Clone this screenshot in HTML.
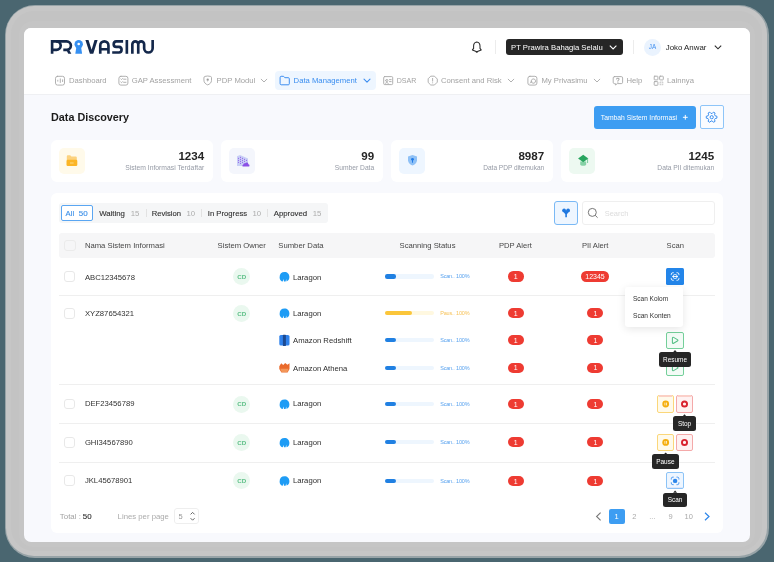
<!DOCTYPE html>
<html><head><meta charset="utf-8"><title>Data Discovery</title>
<style>
html,body{margin:0;padding:0;width:774px;height:562px;overflow:hidden;font-family:"Liberation Sans", sans-serif;}
#root{position:absolute;left:0;top:0;width:774px;height:562px;will-change:transform;}
.r{position:absolute;}
.t{position:absolute;white-space:nowrap;}
svg.r{overflow:visible;}
</style></head><body><div id="root">
<div class="r" style="left:0;top:0;width:774px;height:562px;background:#4a6670"></div>
<div class="r" style="left:4.5px;top:4.5px;width:764px;height:553px;border-radius:30px;background:#97a3a7"></div>
<div class="r" style="left:6px;top:6px;width:761px;height:550px;border-radius:28px;background:#c6c6c6"></div>
<div class="r" style="left:11px;top:11px;width:751px;height:540px;border-radius:23px;background:#c3c3c3"></div>
<div class="r" style="left:19px;top:21px;width:736px;height:526px;border-radius:14px;background:#c5c5c5"></div>
<div class="r" style="left:24px;top:28px;width:726px;height:513.5px;border-radius:7px;background:#f8f9fd;overflow:hidden">
<div class="r" style="left:0;top:0;width:726px;height:66px;background:#fff;border-bottom:1px solid #eff0f3"></div>
</div>
<svg class="r" style="left:0px;top:0px" width="774" height="100" viewBox="0 0 774 100">
<g fill="none" stroke="#14284b" stroke-width="2.65">
<path d="M52.1 53.8 V41.35 H56.45 A4.25 4.25 0 0 1 56.45 49.85 H52.1"/>
<path d="M56 41.35 H66.65 A4.25 4.25 0 0 1 66.65 49.85 H63.3"/>
<path d="M100.25 53.8 V45.45 A4.1 4.1 0 0 1 108.45 45.45 V53.8 M101 49.2 H108"/>
<path d="M123.1 41.35 H116.3 A2.78 2.78 0 0 0 116.3 46.9 H118.97 A2.78 2.78 0 0 1 118.97 52.45 H112.2"/>
<path d="M126.85 40 V53.8"/>
<path d="M132.35 53.8 V44.3 A2.95 2.95 0 0 1 138.25 44.3 V53.8 M138.25 44.3 A2.95 2.95 0 0 1 144.15 44.3 V48.25 A4.25 4.25 0 0 0 152.65 48.25 V40"/>
</g>
<g fill="#14284b">
<path d="M66 49.5 H69 L71.3 53.8 H68.3 Z"/>
<path d="M85.4 40 H88.5 L91.6 49.8 L94.5 40 H97.6 L93.3 53.8 H89.9 Z"/>
</g>
<g fill="#3690f2">
<circle cx="78.7" cy="44.2" r="4.2"/>
<path d="M76.4 46.8 H81 L82.1 53.8 H75.3 Z"/>
<circle cx="78.7" cy="44.0" r="1.3" fill="#fff"/>
</g>
</svg>
<svg class="r" style="left:0px;top:0px" width="774" height="100" viewBox="0 0 774 100"><g fill="none" stroke="#2b2b2b" stroke-width="1.05" stroke-linejoin="round">
<path d="M476.8 41.9 C474.6 42.2 473.6 43.9 473.6 46 V48.4 L472.4 49.9 L476.8 51.7 L481.2 49.9 L480 48.4 V46 C480 43.9 479 42.2 476.8 41.9 Z"/>
<path d="M475.9 51.6 Q476.8 52.6 477.7 51.6"/>
</g></svg>
<div class="r" style="left:495px;top:40px;width:1px;height:14px;background:#ececec"></div>
<div class="r" style="left:506px;top:39px;width:117px;height:16px;background:#262626;border-radius:3px"></div>
<div class="t" style="left:511.00px;top:44px;font-size:7.7px;line-height:7.7px;color:#fff;font-weight:400;">PT Prawira Bahagia Selalu</div>
<svg class="r" style="left:0px;top:0px" width="774" height="100" viewBox="0 0 774 100"><path d="M609.8 45.6 L613.1 48.9 L616.4 45.6" fill="none" stroke="#fff" stroke-width="1.1"/></svg>
<div class="r" style="left:633px;top:40px;width:1px;height:14px;background:#ececec"></div>
<div class="r" style="left:644px;top:38.5px;width:17px;height:17.0px;background:#eaf3fe;border-radius:50%"></div>
<div class="t" style="left:502.50px;width:300px;text-align:center;top:44px;font-size:6.3px;line-height:6.3px;color:#3d8ef0;font-weight:400;letter-spacing:0.2px;">JA</div>
<div class="t" style="left:665.70px;top:44px;font-size:7.9px;line-height:7.9px;color:#222;font-weight:400;">Joko Anwar</div>
<svg class="r" style="left:0px;top:0px" width="774" height="100" viewBox="0 0 774 100"><path d="M714.8 45.6 L718 48.8 L721.2 45.6" fill="none" stroke="#2b2b2b" stroke-width="1.1"/></svg>
<div class="r" style="left:275.4px;top:70.8px;width:100.80000000000001px;height:19.700000000000003px;background:#eef6ff;border-radius:4px"></div>
<svg class="r" style="left:0px;top:0px" width="774" height="100" viewBox="0 0 774 100"><g fill="none" stroke="#a8a8a8" stroke-width="0.9" stroke-linejoin="round" stroke-linecap="round">
<rect x="55.5" y="76.3" width="9" height="8.8" rx="2"/>
<path d="M57.8 80.2 V81.2 M60.3 78.9 V82.5 M62.6 79.8 V81.6"/>
<rect x="118.9" y="76.3" width="9" height="8.8" rx="2"/>
<path d="M120.8 78.9 L121.5 79.6 L122.6 78.5 M123.6 79.2 H126 M120.8 82 L121.5 82.7 L122.6 81.6 M123.6 82.3 H126"/>
<path d="M203.9 77.6 Q203.9 76.6 205 76.4 L207.7 76 L210.4 76.4 Q211.5 76.6 211.5 77.6 V80.4 C211.5 82.7 209.8 84.1 207.7 84.9 C205.6 84.1 203.9 82.7 203.9 80.4 Z"/>
<circle cx="207.7" cy="79.7" r="1.15" fill="#9a9a9a" stroke="none"/><path d="M207.2 80 L207.7 82.3 L208.2 80 Z" fill="#b5b5b5" stroke="none"/>
<path d="M261.2 79.2 L264 82 L266.8 79.2"/>
<path d="M508.2 79.2 L511 82 L513.8 79.2"/>
<path d="M594.2 79.2 L597 82 L599.8 79.2"/>
<rect x="383.7" y="76.6" width="9" height="8" rx="1"/>
<path d="M385.7 80.5 A1.1 1.1 0 1 0 387.9 80.5 A1.1 1.1 0 1 0 385.7 80.5 M385.3 83.3 C385.6 82.2 388 82.2 388.3 83.3 M389.5 79.6 H391.2 M389.5 81.6 H391.2"/>
<path d="M437.03 82.44 L434.44 85.03 L430.76 85.03 L428.17 82.44 L428.17 78.76 L430.76 76.17 L434.44 76.17 L437.03 78.76 Z"/>
<path d="M432.6 78.4 V81.1 M432.6 82.8 V82.9"/>
<rect x="527.9" y="76.3" width="9" height="8.8" rx="2"/>
<path d="M530.3 83 L531.7 81.5 M531.3 81.9 A2.2 2.2 0 1 0 533.1 78.9 A2.2 2.2 0 0 0 531.3 81.9"/>
<path d="M614.5 76.6 H621.3 A1.3 1.3 0 0 1 622.6 77.9 V82.3 A1.3 1.3 0 0 1 621.3 83.6 H617.4 L615.4 85 V83.6 H614.5 A1.3 1.3 0 0 1 613.2 82.3 V77.9 A1.3 1.3 0 0 1 614.5 76.6 Z"/>
<path d="M616.6 79 C616.8 77.9 619.3 77.9 619 79.4 C618.8 80.2 617.9 80.2 617.9 81.1 M617.9 82.2 V82.3" stroke-width="1.05"/>
<rect x="654.2" y="76.2" width="3.7" height="3.7" rx="0.6"/>
<rect x="659.6" y="76.2" width="3.7" height="3.7" rx="0.6"/>
<rect x="654.2" y="81.6" width="3.7" height="3.7" rx="0.6"/>
<rect x="659.6" y="81.6" width="3.7" height="3.7" rx="0.6" fill="#cfcfcf" stroke="none"/><path d="M659.6 83.45 H663.3 M661.45 81.6 V85.3" stroke="#fff" stroke-width="0.6"/>
</g>
<g fill="none" stroke="#3d8ef0" stroke-width="1" stroke-linejoin="round" stroke-linecap="round">
<path d="M280.1 77.3 A1 1 0 0 1 281.1 76.3 H283.6 L284.8 77.7 H288.3 A1 1 0 0 1 289.3 78.7 V83.8 A1 1 0 0 1 288.3 84.8 H281.1 A1 1 0 0 1 280.1 83.8 Z"/>
<path d="M364 79.2 L367 82.2 L370 79.2" stroke-width="1.1"/>
</g></svg>
<div class="t" style="left:69.00px;top:77px;font-size:7.7px;line-height:7.7px;color:#a3a3a3;font-weight:400;">Dashboard</div>
<div class="t" style="left:131.70px;top:77px;font-size:7.7px;line-height:7.7px;color:#a3a3a3;font-weight:400;">GAP Assessment</div>
<div class="t" style="left:216.60px;top:77px;font-size:7.7px;line-height:7.7px;color:#a3a3a3;font-weight:400;">PDP Modul</div>
<div class="t" style="left:293.60px;top:77px;font-size:7.7px;line-height:7.7px;color:#3a8ef0;font-weight:400;">Data Management</div>
<div class="t" style="left:396.70px;top:77px;font-size:7.05px;line-height:7.05px;color:#a3a3a3;font-weight:400;">DSAR</div>
<div class="t" style="left:441.00px;top:77px;font-size:7.7px;line-height:7.7px;color:#a3a3a3;font-weight:400;">Consent and Risk</div>
<div class="t" style="left:541.40px;top:77px;font-size:7.7px;line-height:7.7px;color:#a3a3a3;font-weight:400;">My Privasimu</div>
<div class="t" style="left:626.50px;top:77px;font-size:7.7px;line-height:7.7px;color:#a3a3a3;font-weight:400;">Help</div>
<div class="t" style="left:667.00px;top:77px;font-size:7.7px;line-height:7.7px;color:#a3a3a3;font-weight:400;">Lainnya</div>
<div class="t" style="left:51.00px;top:112px;font-size:10.8px;line-height:10.8px;color:#1b1b1b;font-weight:700;">Data Discovery</div>
<div class="r" style="left:594px;top:106px;width:102px;height:23px;background:#3d9df2;border-radius:3px"></div>
<div class="t" style="left:600.80px;top:115px;font-size:6.78px;line-height:6.78px;color:#fff;font-weight:400;">Tambah Sistem Informasi</div>
<svg class="r" style="left:0px;top:0px" width="774" height="140" viewBox="0 0 774 140"><path d="M685.3 114.9 V119.7 M682.9 117.3 H687.7" stroke="#fff" stroke-width="1"/></svg>
<div class="r" style="left:700px;top:105px;width:24px;height:24px;background:#fafcff;border:1px solid #8ec5f8;border-radius:2px;box-sizing:border-box"></div>
<svg class="r" style="left:0px;top:0px" width="774" height="140" viewBox="0 0 774 140"><g fill="none" stroke="#3b8ff0" stroke-width="1" stroke-linejoin="round">
<path d="M716.92 116.26 L716.92 118.14 L715.15 118.56 L714.55 119.59 L715.07 121.34 L713.45 122.27 L712.19 120.95 L711.01 120.95 L709.75 122.27 L708.13 121.34 L708.65 119.59 L708.05 118.56 L706.28 118.14 L706.28 116.26 L708.05 115.84 L708.65 114.81 L708.13 113.06 L709.75 112.13 L711.01 113.45 L712.19 113.45 L713.45 112.13 L715.07 113.06 L714.55 114.81 L715.15 115.84 Z"/>
<circle cx="711.7" cy="117.2" r="1.6"/>
</g></svg>
<div class="r" style="left:51px;top:140px;width:162px;height:42px;background:#fff;border-radius:6px"></div>
<div class="r" style="left:59px;top:148px;width:26px;height:26px;background:#fffaea;border-radius:5px"></div>
<div class="t" style="right:569.80px;top:150px;font-size:11.6px;line-height:11.6px;color:#262626;font-weight:700;">1234</div>
<div class="t" style="right:569.80px;top:165px;font-size:6.79px;line-height:6.79px;color:#959aa5;font-weight:400;">Sistem Informasi Terdaftar</div>
<div class="r" style="left:221px;top:140px;width:162px;height:42px;background:#fff;border-radius:6px"></div>
<div class="r" style="left:229px;top:148px;width:26px;height:26px;background:#f4f6fc;border-radius:5px"></div>
<div class="t" style="right:399.80px;top:150px;font-size:11.6px;line-height:11.6px;color:#262626;font-weight:700;">99</div>
<div class="t" style="right:399.80px;top:165px;font-size:6.7px;line-height:6.7px;color:#959aa5;font-weight:400;">Sumber Data</div>
<div class="r" style="left:391px;top:140px;width:162px;height:42px;background:#fff;border-radius:6px"></div>
<div class="r" style="left:399px;top:148px;width:26px;height:26px;background:#eef6ff;border-radius:5px"></div>
<div class="t" style="right:229.80px;top:150px;font-size:11.6px;line-height:11.6px;color:#262626;font-weight:700;">8987</div>
<div class="t" style="right:229.80px;top:165px;font-size:6.56px;line-height:6.56px;color:#959aa5;font-weight:400;">Data PDP ditemukan</div>
<div class="r" style="left:561px;top:140px;width:162px;height:42px;background:#fff;border-radius:6px"></div>
<div class="r" style="left:569px;top:148px;width:26px;height:26px;background:#edf9f1;border-radius:5px"></div>
<div class="t" style="right:59.80px;top:150px;font-size:11.6px;line-height:11.6px;color:#262626;font-weight:700;">1245</div>
<div class="t" style="right:59.80px;top:165px;font-size:6.7px;line-height:6.7px;color:#959aa5;font-weight:400;">Data PII ditemukan</div>
<svg class="r" style="left:0px;top:0px" width="774" height="200" viewBox="0 0 774 200">
<path d="M66.8 156.2 A1 1 0 0 1 67.8 155.2 H70.2 L71.4 156.5 H75.8 A1 1 0 0 1 76.8 157.5 V160 H66.8 Z" fill="#fcd27e"/>
<rect x="66.5" y="159.8" width="10.8" height="6.2" rx="1.2" fill="#fbb526"/>
<rect x="70" y="162.6" width="3.6" height="0.8" fill="#fde3a0"/>
<path d="M237 156.2 L240 155 L248 158.5 V166 H237 Z" fill="#c8cff6"/>
<g fill="#8b50e6">
<circle cx="238.5" cy="158.3" r="0.55"/><circle cx="240.5" cy="157.3" r="0.55"/><circle cx="242.5" cy="158.3" r="0.55"/><circle cx="244.5" cy="159.3" r="0.55"/><circle cx="246.5" cy="160.3" r="0.55"/>
<circle cx="238.5" cy="160.3" r="0.55"/><circle cx="240.5" cy="159.3" r="0.55"/><circle cx="242.5" cy="160.3" r="0.55"/><circle cx="244.5" cy="161.3" r="0.55"/>
<circle cx="238.5" cy="162.3" r="0.55"/><circle cx="240.5" cy="161.3" r="0.55"/><circle cx="242.5" cy="162.3" r="0.55"/>
<circle cx="240.5" cy="163.3" r="0.55"/>
<path d="M243.3 166.6 H248.3 A1.2 1.2 0 0 0 248.3 164.2 A1.6 1.6 0 0 0 245.3 163.3 A1.4 1.4 0 0 0 243.3 164.8 A0.9 0.9 0 0 0 243.3 166.6 Z"/>
</g>
<path d="M412.5 155 L417 156.6 V160.3 C417 163 414.8 164.8 412.5 165.6 C410.2 164.8 408 163 408 160.3 V156.6 Z" fill="#8fc1f6"/>
<circle cx="412.5" cy="159.3" r="1.4" fill="#1f7ae8"/>
<rect x="412" y="159.5" width="1" height="3.2" fill="#1f7ae8"/>
<path d="M580.2 161.5 V164.5 C580.2 166.2 586.2 166.2 586.2 164.5 V161.5 Z" fill="#86d1a6"/>
<path d="M583.2 154.8 L588.3 158.4 L583.2 162.3 L578.1 158.4 Z" fill="#27a55e"/>
<path d="M587.6 158.4 V163" stroke="#5fbf88" stroke-width="0.8"/>
</svg>
<div class="r" style="left:51px;top:193px;width:672px;height:340px;background:#fff;border-radius:6px"></div>
<div class="r" style="left:59px;top:203px;width:268.6px;height:19.69999999999999px;background:#f5f6f7;border-radius:3px"></div>
<div class="r" style="left:61px;top:205px;width:31.5px;height:15.5px;background:#fff;border:1px solid #5aa6f2;border-radius:2px;box-sizing:border-box"></div>
<div class="t" style="left:65.60px;top:210px;font-size:7.7px;line-height:7.7px;color:#3b8fe8;font-weight:400;-webkit-text-stroke:0.12px currentColor;">All</div>
<div class="t" style="left:78.80px;top:210px;font-size:8.0px;line-height:8.0px;color:#3b8fe8;font-weight:400;-webkit-text-stroke:0.12px currentColor;">50</div>
<div class="t" style="left:99.20px;top:210px;font-size:7.8px;line-height:7.8px;color:#333;font-weight:400;-webkit-text-stroke:0.12px currentColor;">Waiting</div>
<div class="t" style="left:130.70px;top:210px;font-size:7.8px;line-height:7.8px;color:#adadad;font-weight:400;">15</div>
<div class="t" style="left:151.70px;top:210px;font-size:7.65px;line-height:7.65px;color:#333;font-weight:400;-webkit-text-stroke:0.12px currentColor;">Revision</div>
<div class="t" style="left:186.40px;top:210px;font-size:7.8px;line-height:7.8px;color:#adadad;font-weight:400;">10</div>
<div class="t" style="left:207.80px;top:210px;font-size:7.7px;line-height:7.7px;color:#333;font-weight:400;-webkit-text-stroke:0.12px currentColor;">In Progress</div>
<div class="t" style="left:252.40px;top:210px;font-size:7.8px;line-height:7.8px;color:#adadad;font-weight:400;">10</div>
<div class="t" style="left:273.70px;top:210px;font-size:7.83px;line-height:7.83px;color:#333;font-weight:400;-webkit-text-stroke:0.12px currentColor;">Approved</div>
<div class="t" style="left:312.70px;top:210px;font-size:7.8px;line-height:7.8px;color:#adadad;font-weight:400;">15</div>
<div class="r" style="left:145.6px;top:209px;width:0.8000000000000114px;height:8px;background:#e2e2e2"></div>
<div class="r" style="left:200.7px;top:209px;width:0.8000000000000114px;height:8px;background:#e2e2e2"></div>
<div class="r" style="left:266.5px;top:209px;width:0.8000000000000114px;height:8px;background:#e2e2e2"></div>
<div class="r" style="left:554px;top:201px;width:24px;height:24px;background:#eef6ff;border:1px solid #7ab9f5;border-radius:3px;box-sizing:border-box"></div>
<svg class="r" style="left:0px;top:0px" width="774" height="240" viewBox="0 0 774 240"><g fill="#1f78e0"><circle cx="564.1" cy="210.4" r="1.9"/><circle cx="568.1" cy="210.4" r="1.9"/><path d="M562.3 210.6 H569.9 L566.9 214.2 V217.2 H565.3 V214.2 Z"/></g></svg>
<div class="r" style="left:582px;top:201px;width:133px;height:24px;background:#fff;border:1px solid #efefef;border-radius:3px;box-sizing:border-box"></div>
<svg class="r" style="left:0px;top:0px" width="774" height="240" viewBox="0 0 774 240"><g fill="none" stroke="#777" stroke-width="1"><circle cx="592.3" cy="212.4" r="4"/><path d="M595.2 215.3 L597.6 217.7"/></g></svg>
<div class="t" style="left:604.70px;top:210px;font-size:7.5px;line-height:7.5px;color:#dcdcdc;font-weight:400;">Search</div>
<div class="r" style="left:59px;top:233px;width:656px;height:24.5px;background:#f6f6f7;border-radius:3px"></div>
<div class="r" style="left:64px;top:240px;width:11.599999999999994px;height:11px;border:1px solid #ebebeb;border-radius:3px;box-sizing:border-box"></div>
<div class="t" style="left:84.90px;top:242px;font-size:7.7px;line-height:7.7px;color:#474747;font-weight:400;">Nama Sistem Informasi</div>
<div class="t" style="left:217.60px;top:242px;font-size:7.7px;line-height:7.7px;color:#474747;font-weight:400;">Sistem Owner</div>
<div class="t" style="left:278.30px;top:242px;font-size:7.7px;line-height:7.7px;color:#474747;font-weight:400;">Sumber Data</div>
<div class="t" style="left:399.50px;top:242px;font-size:7.7px;line-height:7.7px;color:#474747;font-weight:400;">Scanning Status</div>
<div class="t" style="left:499.00px;top:242px;font-size:7.6px;line-height:7.6px;color:#474747;font-weight:400;">PDP Alert</div>
<div class="t" style="left:581.90px;top:242px;font-size:7.6px;line-height:7.6px;color:#474747;font-weight:400;">PII Alert</div>
<div class="t" style="left:666.60px;top:242px;font-size:7.6px;line-height:7.6px;color:#474747;font-weight:400;">Scan</div>
<div class="r" style="left:59px;top:295px;width:656px;height:0.8000000000000114px;background:#efefef"></div>
<div class="r" style="left:59px;top:384.4px;width:656px;height:0.8000000000000114px;background:#efefef"></div>
<div class="r" style="left:59px;top:423.3px;width:656px;height:0.8000000000000114px;background:#efefef"></div>
<div class="r" style="left:59px;top:461.8px;width:656px;height:0.8000000000000114px;background:#efefef"></div>
<div class="r" style="left:64.2px;top:271.1px;width:10.799999999999997px;height:10.799999999999955px;border:1px solid #e8e8e8;border-radius:3px;box-sizing:border-box"></div>
<div class="t" style="left:84.90px;top:274px;font-size:7.7px;line-height:7.7px;color:#333;font-weight:400;">ABC12345678</div>
<div class="r" style="left:233.2px;top:268.0px;width:17.0px;height:17.0px;background:#eaf8ef;border-radius:50%"></div>
<div class="t" style="left:91.70px;width:300px;text-align:center;top:274px;font-size:6.2px;line-height:6.2px;color:#5cbf86;font-weight:700;">CD</div>
<svg class="r" style="left:0px;top:0px" width="774" height="562" viewBox="0 0 774 562"><path d="M279.6 277.5 C279.6 273.9 281.6 272.1 284.5 272.1 C287.4 272.1 289.4 274.1 289.4 277.1 C289.4 279.5 288 281.1 286.6 281.4 L286.2 279.0 L285.6 281.5 H284 L283.4 279.1 L282.8 281.5 C281 281.3 279.6 279.9 279.6 277.5 Z" fill="#1e9cf5"/></svg>
<div class="t" style="left:293.00px;top:274px;font-size:7.7px;line-height:7.7px;color:#2e2e2e;font-weight:400;">Laragon</div>
<div class="r" style="left:385.2px;top:274.3px;width:48.69999999999999px;height:4.399999999999977px;background:#eef6fe;border-radius:2.2px"></div>
<div class="r" style="left:385.2px;top:274.3px;width:11.0px;height:4.399999999999977px;background:#2080e2;border-radius:2.2px"></div>
<div class="t" style="left:440.20px;top:274px;font-size:5.5px;line-height:5.5px;color:#5aa3ef;font-weight:400;letter-spacing:-0.18px;">Scan.. 100%</div>
<div class="r" style="left:507.6px;top:271.3px;width:16.0px;height:10.399999999999977px;background:#ee3b32;border-radius:5.2px"></div>
<div class="t" style="left:365.60px;width:300px;text-align:center;top:273px;font-size:7px;line-height:7px;color:#fff;font-weight:400;">1</div>
<div class="r" style="left:581.2px;top:271.3px;width:27.59999999999991px;height:10.399999999999977px;background:#ee3b32;border-radius:5.2px"></div>
<div class="t" style="left:445.00px;width:300px;text-align:center;top:273px;font-size:7px;line-height:7px;color:#fff;font-weight:400;">12345</div>
<div class="r" style="left:666.4px;top:268.2px;width:17.399999999999977px;height:16.600000000000023px;background:#2385e9;border-radius:1.5px"></div>
<svg class="r" style="left:0px;top:0px" width="774" height="562" viewBox="0 0 774 562"><g fill="none" stroke="#fff" stroke-width="0.9"><path d="M671.3000000000001 275.09999999999997 V274.3 A1.6 1.6 0 0 1 672.9000000000001 272.7 H673.7 M676.5 272.7 H677.3 A1.6 1.6 0 0 1 678.9 274.3 V275.09999999999997 M678.9 277.90000000000003 V278.7 A1.6 1.6 0 0 1 677.3 280.3 H676.5 M673.7 280.3 H672.9000000000001 A1.6 1.6 0 0 1 671.3000000000001 278.7 V277.90000000000003"/><rect x="673.4" y="274.6" width="3.4" height="3.8" rx="1"/><path d="M672.2 276.5 H678.0"/></g></svg>
<div class="r" style="left:64.2px;top:308.0px;width:10.799999999999997px;height:10.799999999999955px;border:1px solid #e8e8e8;border-radius:3px;box-sizing:border-box"></div>
<div class="t" style="left:84.90px;top:310px;font-size:7.7px;line-height:7.7px;color:#333;font-weight:400;">XYZ87654321</div>
<div class="r" style="left:233.2px;top:304.5px;width:17.0px;height:17.0px;background:#eaf8ef;border-radius:50%"></div>
<div class="t" style="left:91.70px;width:300px;text-align:center;top:311px;font-size:6.2px;line-height:6.2px;color:#5cbf86;font-weight:700;">CD</div>
<svg class="r" style="left:0px;top:0px" width="774" height="562" viewBox="0 0 774 562"><path d="M279.6 314 C279.6 310.4 281.6 308.6 284.5 308.6 C287.4 308.6 289.4 310.6 289.4 313.6 C289.4 316 288 317.6 286.6 317.9 L286.2 315.5 L285.6 318 H284 L283.4 315.6 L282.8 318 C281 317.8 279.6 316.4 279.6 314 Z" fill="#1e9cf5"/></svg>
<div class="t" style="left:293.00px;top:310px;font-size:7.7px;line-height:7.7px;color:#2e2e2e;font-weight:400;">Laragon</div>
<div class="r" style="left:507.6px;top:307.8px;width:16.0px;height:10.399999999999977px;background:#ee3b32;border-radius:5.2px"></div>
<div class="t" style="left:365.60px;width:300px;text-align:center;top:310px;font-size:7px;line-height:7px;color:#fff;font-weight:400;">1</div>
<div class="r" style="left:587.4px;top:307.8px;width:15.899999999999977px;height:10.399999999999977px;background:#ee3b32;border-radius:5.2px"></div>
<div class="t" style="left:445.35px;width:300px;text-align:center;top:310px;font-size:7px;line-height:7px;color:#fff;font-weight:400;">1</div>
<svg class="r" style="left:0px;top:0px" width="774" height="562" viewBox="0 0 774 562"><rect x="279.3" y="335.0" width="10.2" height="10.6" rx="1.6" fill="#2f82ec"/><rect x="282.9" y="334.7" width="3" height="11.2" rx="0.5" fill="#1d4a91"/></svg>
<div class="t" style="left:293.00px;top:337px;font-size:7.7px;line-height:7.7px;color:#2e2e2e;font-weight:400;">Amazon Redshift</div>
<div class="r" style="left:507.6px;top:335.1px;width:16.0px;height:10.399999999999977px;background:#ee3b32;border-radius:5.2px"></div>
<div class="t" style="left:365.60px;width:300px;text-align:center;top:337px;font-size:7px;line-height:7px;color:#fff;font-weight:400;">1</div>
<div class="r" style="left:587.4px;top:335.1px;width:15.899999999999977px;height:10.399999999999977px;background:#ee3b32;border-radius:5.2px"></div>
<div class="t" style="left:445.35px;width:300px;text-align:center;top:337px;font-size:7px;line-height:7px;color:#fff;font-weight:400;">1</div>
<svg class="r" style="left:0px;top:0px" width="774" height="562" viewBox="0 0 774 562"><path d="M279.3 366.2 L281.2 363.3 L283.2 364.9 L285.2 363.09999999999997 L287.4 364.7 L289.5 363.3 V369.09999999999997 L287.6 372.5 H281.4 L279.3 369.09999999999997 Z" fill="#ea6a2b"/><path d="M280.2 368.7 H288.6 L287.4 372.09999999999997 H281.6 Z" fill="#f39658"/></svg>
<div class="t" style="left:293.00px;top:365px;font-size:7.7px;line-height:7.7px;color:#2e2e2e;font-weight:400;">Amazon Athena</div>
<div class="r" style="left:507.6px;top:362.5px;width:16.0px;height:10.399999999999977px;background:#ee3b32;border-radius:5.2px"></div>
<div class="t" style="left:365.60px;width:300px;text-align:center;top:364px;font-size:7px;line-height:7px;color:#fff;font-weight:400;">1</div>
<div class="r" style="left:587.4px;top:362.5px;width:15.899999999999977px;height:10.399999999999977px;background:#ee3b32;border-radius:5.2px"></div>
<div class="t" style="left:445.35px;width:300px;text-align:center;top:364px;font-size:7px;line-height:7px;color:#fff;font-weight:400;">1</div>
<div class="r" style="left:385.2px;top:310.8px;width:48.69999999999999px;height:4.399999999999977px;background:#fff8e0;border-radius:2.2px"></div>
<div class="r" style="left:385.2px;top:310.8px;width:27.0px;height:4.399999999999977px;background:#fbc63a;border-radius:2.2px"></div>
<div class="t" style="left:440.20px;top:311px;font-size:5.5px;line-height:5.5px;color:#f7c35a;font-weight:400;letter-spacing:-0.18px;">Paus.. 100%</div>
<div class="r" style="left:385.2px;top:338.1px;width:48.69999999999999px;height:4.399999999999977px;background:#eef6fe;border-radius:2.2px"></div>
<div class="r" style="left:385.2px;top:338.1px;width:11.0px;height:4.399999999999977px;background:#2080e2;border-radius:2.2px"></div>
<div class="t" style="left:440.20px;top:338px;font-size:5.5px;line-height:5.5px;color:#5aa3ef;font-weight:400;letter-spacing:-0.18px;">Scan.. 100%</div>
<div class="r" style="left:385.2px;top:365.5px;width:48.69999999999999px;height:4.399999999999977px;background:#eef6fe;border-radius:2.2px"></div>
<div class="r" style="left:385.2px;top:365.5px;width:11.0px;height:4.399999999999977px;background:#2080e2;border-radius:2.2px"></div>
<div class="t" style="left:440.20px;top:366px;font-size:5.5px;line-height:5.5px;color:#5aa3ef;font-weight:400;letter-spacing:-0.18px;">Scan.. 100%</div>
<div class="r" style="left:666.1px;top:331.90000000000003px;width:17.699999999999932px;height:16.799999999999955px;background:#f3fbf6;border:1px solid #74cf9a;border-radius:2px;box-sizing:border-box"></div>
<svg class="r" style="left:0px;top:0px" width="774" height="562" viewBox="0 0 774 562"><path d="M673.6 337.40000000000003 C672.9 337.0 672.4 337.40000000000003 672.4 338.2 V342.40000000000003 C672.4 343.2 672.9 343.6 673.6 343.2 L677.4 341.0 C678.1 340.6 678.1 340.0 677.4 339.6 Z" fill="none" stroke="#55bf85" stroke-width="1.05" stroke-linejoin="round"/></svg>
<div class="r" style="left:666.1px;top:359.3px;width:17.699999999999932px;height:16.799999999999955px;background:#f3fbf6;border:1px solid #74cf9a;border-radius:2px;box-sizing:border-box"></div>
<svg class="r" style="left:0px;top:0px" width="774" height="562" viewBox="0 0 774 562"><path d="M673.6 364.8 C672.9 364.4 672.4 364.8 672.4 365.59999999999997 V369.8 C672.4 370.59999999999997 672.9 371.0 673.6 370.59999999999997 L677.4 368.4 C678.1 368.0 678.1 367.4 677.4 367.0 Z" fill="none" stroke="#55bf85" stroke-width="1.05" stroke-linejoin="round"/></svg>
<div class="r" style="left:64.2px;top:398.6px;width:10.799999999999997px;height:10.799999999999955px;border:1px solid #e8e8e8;border-radius:3px;box-sizing:border-box"></div>
<div class="t" style="left:84.90px;top:400px;font-size:7.7px;line-height:7.7px;color:#333;font-weight:400;">DEF23456789</div>
<div class="r" style="left:233.2px;top:395.5px;width:17.0px;height:17.0px;background:#eaf8ef;border-radius:50%"></div>
<div class="t" style="left:91.70px;width:300px;text-align:center;top:401px;font-size:6.2px;line-height:6.2px;color:#5cbf86;font-weight:700;">CD</div>
<svg class="r" style="left:0px;top:0px" width="774" height="562" viewBox="0 0 774 562"><path d="M279.6 405 C279.6 401.4 281.6 399.6 284.5 399.6 C287.4 399.6 289.4 401.6 289.4 404.6 C289.4 407 288 408.6 286.6 408.9 L286.2 406.5 L285.6 409 H284 L283.4 406.6 L282.8 409 C281 408.8 279.6 407.4 279.6 405 Z" fill="#1e9cf5"/></svg>
<div class="t" style="left:293.00px;top:400px;font-size:7.7px;line-height:7.7px;color:#2e2e2e;font-weight:400;">Laragon</div>
<div class="r" style="left:385.2px;top:401.8px;width:48.69999999999999px;height:4.399999999999977px;background:#eef6fe;border-radius:2.2px"></div>
<div class="r" style="left:385.2px;top:401.8px;width:11.0px;height:4.399999999999977px;background:#2080e2;border-radius:2.2px"></div>
<div class="t" style="left:440.20px;top:402px;font-size:5.5px;line-height:5.5px;color:#5aa3ef;font-weight:400;letter-spacing:-0.18px;">Scan.. 100%</div>
<div class="r" style="left:507.6px;top:398.8px;width:16.0px;height:10.399999999999977px;background:#ee3b32;border-radius:5.2px"></div>
<div class="t" style="left:365.60px;width:300px;text-align:center;top:401px;font-size:7px;line-height:7px;color:#fff;font-weight:400;">1</div>
<div class="r" style="left:587.4px;top:398.8px;width:15.899999999999977px;height:10.399999999999977px;background:#ee3b32;border-radius:5.2px"></div>
<div class="t" style="left:445.35px;width:300px;text-align:center;top:401px;font-size:7px;line-height:7px;color:#fff;font-weight:400;">1</div>
<div class="r" style="left:64.2px;top:436.90000000000003px;width:10.799999999999997px;height:10.799999999999955px;border:1px solid #e8e8e8;border-radius:3px;box-sizing:border-box"></div>
<div class="t" style="left:84.90px;top:439px;font-size:7.7px;line-height:7.7px;color:#333;font-weight:400;">GHI34567890</div>
<div class="r" style="left:233.2px;top:433.8px;width:17.0px;height:17.0px;background:#eaf8ef;border-radius:50%"></div>
<div class="t" style="left:91.70px;width:300px;text-align:center;top:440px;font-size:6.2px;line-height:6.2px;color:#5cbf86;font-weight:700;">CD</div>
<svg class="r" style="left:0px;top:0px" width="774" height="562" viewBox="0 0 774 562"><path d="M279.6 443.3 C279.6 439.7 281.6 437.90000000000003 284.5 437.90000000000003 C287.4 437.90000000000003 289.4 439.90000000000003 289.4 442.90000000000003 C289.4 445.3 288 446.90000000000003 286.6 447.2 L286.2 444.8 L285.6 447.3 H284 L283.4 444.90000000000003 L282.8 447.3 C281 447.1 279.6 445.7 279.6 443.3 Z" fill="#1e9cf5"/></svg>
<div class="t" style="left:293.00px;top:439px;font-size:7.7px;line-height:7.7px;color:#2e2e2e;font-weight:400;">Laragon</div>
<div class="r" style="left:385.2px;top:440.1px;width:48.69999999999999px;height:4.399999999999977px;background:#eef6fe;border-radius:2.2px"></div>
<div class="r" style="left:385.2px;top:440.1px;width:11.0px;height:4.399999999999977px;background:#2080e2;border-radius:2.2px"></div>
<div class="t" style="left:440.20px;top:440px;font-size:5.5px;line-height:5.5px;color:#5aa3ef;font-weight:400;letter-spacing:-0.18px;">Scan.. 100%</div>
<div class="r" style="left:507.6px;top:437.1px;width:16.0px;height:10.399999999999977px;background:#ee3b32;border-radius:5.2px"></div>
<div class="t" style="left:365.60px;width:300px;text-align:center;top:439px;font-size:7px;line-height:7px;color:#fff;font-weight:400;">1</div>
<div class="r" style="left:587.4px;top:437.1px;width:15.899999999999977px;height:10.399999999999977px;background:#ee3b32;border-radius:5.2px"></div>
<div class="t" style="left:445.35px;width:300px;text-align:center;top:439px;font-size:7px;line-height:7px;color:#fff;font-weight:400;">1</div>
<div class="r" style="left:64.2px;top:475.3px;width:10.799999999999997px;height:10.799999999999955px;border:1px solid #e8e8e8;border-radius:3px;box-sizing:border-box"></div>
<div class="t" style="left:84.90px;top:477px;font-size:7.7px;line-height:7.7px;color:#333;font-weight:400;">JKL45678901</div>
<div class="r" style="left:233.2px;top:472.2px;width:17.0px;height:17.0px;background:#eaf8ef;border-radius:50%"></div>
<div class="t" style="left:91.70px;width:300px;text-align:center;top:478px;font-size:6.2px;line-height:6.2px;color:#5cbf86;font-weight:700;">CD</div>
<svg class="r" style="left:0px;top:0px" width="774" height="562" viewBox="0 0 774 562"><path d="M279.6 481.7 C279.6 478.09999999999997 281.6 476.3 284.5 476.3 C287.4 476.3 289.4 478.3 289.4 481.3 C289.4 483.7 288 485.3 286.6 485.59999999999997 L286.2 483.2 L285.6 485.7 H284 L283.4 483.3 L282.8 485.7 C281 485.5 279.6 484.09999999999997 279.6 481.7 Z" fill="#1e9cf5"/></svg>
<div class="t" style="left:293.00px;top:477px;font-size:7.7px;line-height:7.7px;color:#2e2e2e;font-weight:400;">Laragon</div>
<div class="r" style="left:385.2px;top:478.5px;width:48.69999999999999px;height:4.399999999999977px;background:#eef6fe;border-radius:2.2px"></div>
<div class="r" style="left:385.2px;top:478.5px;width:11.0px;height:4.399999999999977px;background:#2080e2;border-radius:2.2px"></div>
<div class="t" style="left:440.20px;top:479px;font-size:5.5px;line-height:5.5px;color:#5aa3ef;font-weight:400;letter-spacing:-0.18px;">Scan.. 100%</div>
<div class="r" style="left:507.6px;top:475.5px;width:16.0px;height:10.399999999999977px;background:#ee3b32;border-radius:5.2px"></div>
<div class="t" style="left:365.60px;width:300px;text-align:center;top:478px;font-size:7px;line-height:7px;color:#fff;font-weight:400;">1</div>
<div class="r" style="left:587.4px;top:475.5px;width:15.899999999999977px;height:10.399999999999977px;background:#ee3b32;border-radius:5.2px"></div>
<div class="t" style="left:445.35px;width:300px;text-align:center;top:478px;font-size:7px;line-height:7px;color:#fff;font-weight:400;">1</div>
<div class="r" style="left:657.4px;top:395.4px;width:16.600000000000023px;height:17.200000000000045px;background:#fffaeb;border:1px solid #fbd77a;border-radius:2px;box-sizing:border-box"></div>
<div class="r" style="left:676.3px;top:395.4px;width:16.5px;height:17.200000000000045px;background:#fff2f2;border:1px solid #f4a9a9;border-radius:2px;box-sizing:border-box"></div>
<div class="r" style="left:659.4px;top:395.4px;width:12.600000000000023px;height:1.6000000000000227px;background:#fbd0c4"></div>
<div class="r" style="left:678.3px;top:395.4px;width:12.5px;height:1.6000000000000227px;background:#fbcfc9"></div>
<svg class="r" style="left:0px;top:0px" width="774" height="562" viewBox="0 0 774 562"><circle cx="665.7" cy="404" r="3.4" fill="#f5ae0f"/><path d="M664.9 402.6 V405.4 M666.5 402.6 V405.4" stroke="#fff6dc" stroke-width="0.8"/><circle cx="684.5" cy="404" r="2.55" fill="none" stroke="#d9222e" stroke-width="1.9"/></svg>
<div class="r" style="left:657.4px;top:433.79999999999995px;width:16.600000000000023px;height:17.200000000000045px;background:#fffaeb;border:1px solid #fbd77a;border-radius:2px;box-sizing:border-box"></div>
<div class="r" style="left:676.3px;top:433.79999999999995px;width:16.5px;height:17.200000000000045px;background:#fff2f2;border:1px solid #f4a9a9;border-radius:2px;box-sizing:border-box"></div>
<svg class="r" style="left:0px;top:0px" width="774" height="562" viewBox="0 0 774 562"><circle cx="665.7" cy="442.4" r="3.4" fill="#f5ae0f"/><path d="M664.9 441.0 V443.79999999999995 M666.5 441.0 V443.79999999999995" stroke="#fff6dc" stroke-width="0.8"/><circle cx="684.5" cy="442.4" r="2.55" fill="none" stroke="#d9222e" stroke-width="1.9"/></svg>
<div class="r" style="left:666.4px;top:472.2px;width:17.399999999999977px;height:17.100000000000023px;background:#eef6ff;border:1px solid #8cc3f6;border-radius:2px;box-sizing:border-box"></div>
<div class="r" style="left:668.4px;top:486.6px;width:13.399999999999977px;height:1.6999999999999886px;background:#dfe6fb"></div>
<svg class="r" style="left:0px;top:0px" width="774" height="562" viewBox="0 0 774 562"><g fill="none" stroke="#3b8ff0" stroke-width="0.9"><path d="M671.3000000000001 479.49999999999994 V478.7 A1.6 1.6 0 0 1 672.9000000000001 477.09999999999997 H673.7 M676.5 477.09999999999997 H677.3 A1.6 1.6 0 0 1 678.9 478.7 V479.49999999999994 M678.9 482.3 V483.09999999999997 A1.6 1.6 0 0 1 677.3 484.7 H676.5 M673.7 484.7 H672.9000000000001 A1.6 1.6 0 0 1 671.3000000000001 483.09999999999997 V482.3"/></g><circle cx="675.1" cy="480.9" r="2.2" fill="#2d86ea"/></svg>
<div class="r" style="left:625.2px;top:287px;width:58.19999999999993px;height:39.69999999999999px;background:#fff;border-radius:3px;box-shadow:0 2px 8px rgba(0,0,0,0.10)"></div>
<div class="t" style="left:633.00px;top:296px;font-size:6.5px;line-height:6.5px;color:#333;font-weight:400;">Scan Kolom</div>
<div class="t" style="left:633.00px;top:313px;font-size:6.6px;line-height:6.6px;color:#333;font-weight:400;">Scan Konten</div>
<div class="r" style="left:658.9px;top:352.1px;width:32.39999999999998px;height:14.599999999999966px;background:#262626;border-radius:2.5px"></div>
<svg class="r" style="left:0px;top:0px" width="774" height="562" viewBox="0 0 774 562"><path d="M673 352.3 L675 350.1 L677 352.3 Z" fill="#262626"/></svg>
<div class="t" style="left:525.10px;width:300px;text-align:center;top:357px;font-size:6.45px;line-height:6.45px;color:#fff;font-weight:400;">Resume</div>
<div class="r" style="left:673.1px;top:416.3px;width:22.899999999999977px;height:14.300000000000011px;background:#262626;border-radius:2.5px"></div>
<svg class="r" style="left:0px;top:0px" width="774" height="562" viewBox="0 0 774 562"><path d="M682.5 416.5 L684.5 414.3 L686.5 416.5 Z" fill="#262626"/></svg>
<div class="t" style="left:534.55px;width:300px;text-align:center;top:421px;font-size:6.45px;line-height:6.45px;color:#fff;font-weight:400;">Stop</div>
<div class="r" style="left:652px;top:454.4px;width:26.700000000000045px;height:14.400000000000034px;background:#262626;border-radius:2.5px"></div>
<svg class="r" style="left:0px;top:0px" width="774" height="562" viewBox="0 0 774 562"><path d="M663.7 454.59999999999997 L665.7 452.4 L667.7 454.59999999999997 Z" fill="#262626"/></svg>
<div class="t" style="left:515.35px;width:300px;text-align:center;top:459px;font-size:6.45px;line-height:6.45px;color:#fff;font-weight:400;">Pause</div>
<div class="r" style="left:663.1px;top:492.6px;width:23.899999999999977px;height:14.399999999999977px;background:#262626;border-radius:2.5px"></div>
<svg class="r" style="left:0px;top:0px" width="774" height="562" viewBox="0 0 774 562"><path d="M673.1 492.8 L675.1 490.6 L677.1 492.8 Z" fill="#262626"/></svg>
<div class="t" style="left:525.05px;width:300px;text-align:center;top:497px;font-size:6.45px;line-height:6.45px;color:#fff;font-weight:400;">Scan</div>
<div class="t" style="left:59.80px;top:513px;font-size:7.9px;line-height:7.9px;color:#a3a3a3;font-weight:400;">Total :</div>
<div class="t" style="left:82.80px;top:513px;font-size:7.9px;line-height:7.9px;color:#2e2e2e;font-weight:400;-webkit-text-stroke:0.12px currentColor;">50</div>
<div class="t" style="left:117.60px;top:513px;font-size:7.75px;line-height:7.75px;color:#ababab;font-weight:400;">Lines per page</div>
<div class="r" style="left:174.2px;top:508.3px;width:25.0px;height:15.900000000000034px;border:1px solid #eeeeee;border-radius:3px;box-sizing:border-box"></div>
<div class="t" style="left:178.60px;top:513px;font-size:7.5px;line-height:7.5px;color:#999;font-weight:400;">5</div>
<svg class="r" style="left:0px;top:0px" width="774" height="562" viewBox="0 0 774 562"><path d="M190.6 514.4 L192.6 512.4 L194.6 514.4 M190.6 518.2 L192.6 520.2 L194.6 518.2" fill="none" stroke="#555" stroke-width="0.9"/></svg>
<svg class="r" style="left:0px;top:0px" width="774" height="562" viewBox="0 0 774 562"><path d="M600.6 512.7 L596.6 516.5 L600.6 520.3" fill="none" stroke="#777" stroke-width="1.1"/><path d="M705 512.7 L709 516.5 L705 520.3" fill="none" stroke="#2d86ea" stroke-width="1.2"/></svg>
<div class="r" style="left:608.6px;top:508.7px;width:16.100000000000023px;height:15.500000000000057px;background:#3d9df2;border-radius:2px"></div>
<div class="t" style="left:466.60px;width:300px;text-align:center;top:513px;font-size:7.5px;line-height:7.5px;color:#fff;font-weight:400;">1</div>
<div class="t" style="left:484.40px;width:300px;text-align:center;top:513px;font-size:7.5px;line-height:7.5px;color:#aaa;font-weight:400;">2</div>
<div class="t" style="left:502.40px;width:300px;text-align:center;top:513px;font-size:7.5px;line-height:7.5px;color:#aaa;font-weight:400;">...</div>
<div class="t" style="left:520.70px;width:300px;text-align:center;top:513px;font-size:7.5px;line-height:7.5px;color:#aaa;font-weight:400;">9</div>
<div class="t" style="left:538.70px;width:300px;text-align:center;top:513px;font-size:7.5px;line-height:7.5px;color:#aaa;font-weight:400;">10</div>
</div></body></html>
